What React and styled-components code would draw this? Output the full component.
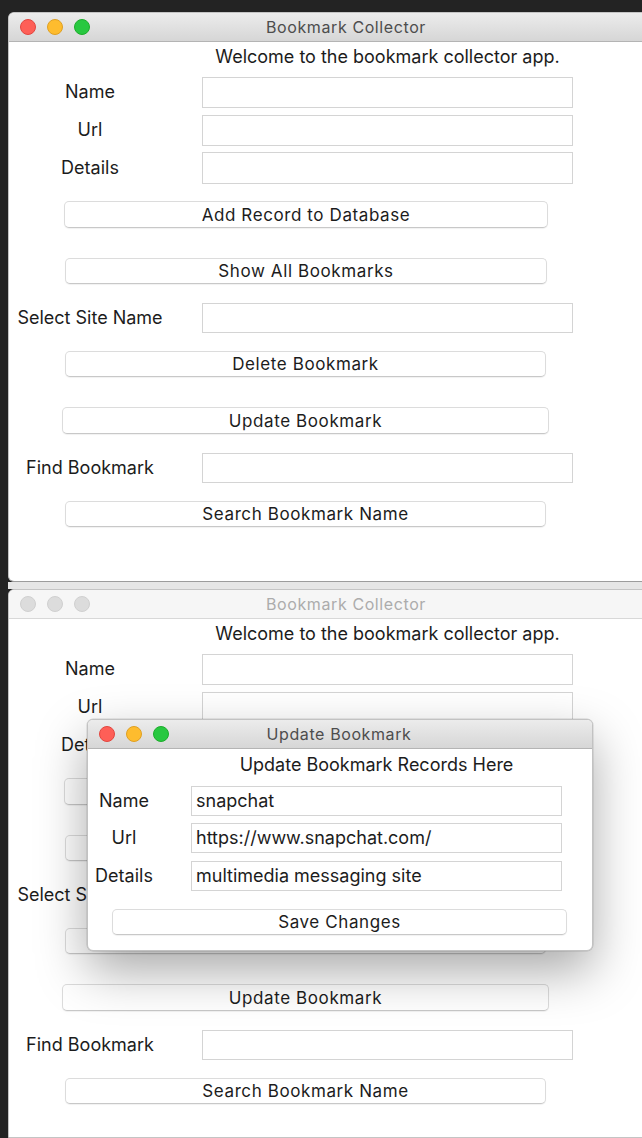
import React from "react";
import styled, { createGlobalStyle, css } from "styled-components";

const Global = createGlobalStyle`
  html, body {
    margin: 0;
    padding: 0;
    width: 642px;
    height: 1138px;
    overflow: hidden;
    background: #232323;
  }
  * { box-sizing: border-box; }
`;

const FONT = `Inter, "DejaVu Sans", sans-serif`;

const Desktop = styled.div`
  position: relative;
  width: 642px;
  height: 1138px;
  padding: 12px 0 0 8px;
  display: flex;
  flex-direction: column;
  gap: 7px;
  font-family: ${FONT};
  color: #1c1c1c;
`;

const Gap = styled.div`
  position: absolute;
  left: 8px;
  right: 0;
  top: 582px;
  height: 7px;
  background: #e6e6e6;
`;

const Window = styled.div`
  position: relative;
  width: 660px;
  flex: ${(p) => (p.$grow ? "1 0 auto" : "0 0 auto")};
  background: #fff;
  border: 1px solid #c4c4c4;
  border-radius: 6px 6px ${(p) => (p.$grow ? "0 0" : "6px 6px")};
  overflow: hidden;
  ${(p) =>
    !p.$grow &&
    css`
      border-bottom: 1px solid #9c9c9c;
    `}
`;

const TitleBar = styled.div`
  position: relative;
  height: 29px;
  display: flex;
  align-items: center;
  padding-left: 11px;
  gap: 11px;
  border-bottom: 1px solid ${(p) => (p.$inactive ? "#d8d8d8" : "#b4b4b4")};
  background: ${(p) =>
    p.$inactive ? "#f6f6f6" : "linear-gradient(#ececec, #d6d6d6)"};
`;

const Light = styled.span`
  width: 16px;
  height: 16px;
  border-radius: 50%;
  background: ${(p) => p.$c};
  border: 1px solid ${(p) => p.$b};
`;

const Title = styled.div`
  position: absolute;
  top: 0;
  bottom: 0;
  left: ${(p) => p.$cx}px;
  transform: translateX(-50%);
  display: flex;
  align-items: center;
  font-size: 16px;
  letter-spacing: 0.6px;
  white-space: nowrap;
  color: ${(p) => (p.$inactive ? "#acacac" : "#4d4d4d")};
`;

const Body = styled.div`
  display: flex;
  flex-direction: column;
  height: ${(p) => (p.$h ? `${p.$h}px` : "auto")};
`;

const Welcome = styled.div`
  margin-top: ${(p) => p.$top}px;
  margin-left: ${(p) => p.$left}px;
  width: 371px;
  height: 20px;
  line-height: 20px;
  text-align: center;
  font-size: 18px;
  white-space: nowrap;
`;

const FieldRow = styled.div`
  margin-top: ${(p) => p.$top}px;
  display: flex;
  align-items: center;
  height: ${(p) => p.$h}px;
`;

const Label = styled.div`
  width: ${(p) => p.$w}px;
  text-align: center;
  font-size: 18px;
  padding-bottom: 2px;
  white-space: nowrap;
`;

const Entry = styled.div`
  margin-left: ${(p) => p.$left}px;
  width: 371px;
  height: 100%;
  border: 1px solid #d4d4d4;
  background: #fff;
  display: flex;
  align-items: center;
  padding: 0 0 2px 4px;
  font-size: 18px;
  white-space: nowrap;
`;

const ButtonLane = styled.div`
  margin-top: ${(p) => p.$top}px;
  width: ${(p) => p.$lane}px;
  display: flex;
  justify-content: center;
`;

const Button = styled.div`
  width: ${(p) => p.$w}px;
  height: ${(p) => p.$h}px;
  margin-left: ${(p) => p.$shift || 0}px;
  background: #fff;
  border: 1px solid #dcdcdc;
  border-bottom-color: #c8c8c8;
  border-radius: 5px;
  box-shadow: 0 1px 1px rgba(0, 0, 0, 0.06);
  display: flex;
  align-items: center;
  justify-content: center;
  font-size: 17px;
  letter-spacing: 0.6px;
  white-space: nowrap;
`;

const Dialog = styled.div`
  position: absolute;
  left: 87px;
  top: 719px;
  width: 506px;
  height: 232px;
  background: #fff;
  border: 1px solid #c2c2c2;
  border-radius: 6px;
  overflow: hidden;
  box-shadow: 0 20px 50px rgba(0, 0, 0, 0.34), 0 0 0 0.5px rgba(0, 0, 0, 0.15);
`;

function Lights({ inactive }) {
  if (inactive) {
    return (
      <>
        <Light $c="#dcdcdc" $b="#d0d0d0" />
        <Light $c="#dcdcdc" $b="#d0d0d0" />
        <Light $c="#dcdcdc" $b="#d0d0d0" />
      </>
    );
  }
  return (
    <>
      <Light $c="#fe5f57" $b="#e2463f" />
      <Light $c="#febc2e" $b="#dfa023" />
      <Light $c="#28c840" $b="#1dad2b" />
    </>
  );
}

function MainContent({ h }) {
  return (
    <Body $h={h}>
      <Welcome $top={5} $left={193}>Welcome to the bookmark collector app.</Welcome>
      <FieldRow $top={10} $h={31}>
        <Label $w={162}>Name</Label>
        <Entry $left={31} />
      </FieldRow>
      <FieldRow $top={7} $h={31}>
        <Label $w={162}>Url</Label>
        <Entry $left={31} />
      </FieldRow>
      <FieldRow $top={6} $h={32}>
        <Label $w={162}>Details</Label>
        <Entry $left={31} />
      </FieldRow>
      <ButtonLane $top={17} $lane={594}>
        <Button $w={484} $h={27}>Add Record to Database</Button>
      </ButtonLane>
      <ButtonLane $top={30} $lane={594}>
        <Button $w={482} $h={26}>Show All Bookmarks</Button>
      </ButtonLane>
      <FieldRow $top={19} $h={30}>
        <Label $w={162}>Select Site Name</Label>
        <Entry $left={31} />
      </FieldRow>
      <ButtonLane $top={18} $lane={594}>
        <Button $w={481} $h={26} $shift={-1}>Delete Bookmark</Button>
      </ButtonLane>
      <ButtonLane $top={30} $lane={594}>
        <Button $w={487} $h={27} $shift={-1}>Update Bookmark</Button>
      </ButtonLane>
      <FieldRow $top={19} $h={30}>
        <Label $w={162}>Find Bookmark</Label>
        <Entry $left={31} />
      </FieldRow>
      <ButtonLane $top={18} $lane={594}>
        <Button $w={481} $h={26} $shift={-1}>Search Bookmark Name</Button>
      </ButtonLane>
    </Body>
  );
}

export default function App() {
  return (
    <>
      <Global />
      <Desktop>
        <Window>
          <TitleBar>
            <Lights />
            <Title $cx={337}>Bookmark Collector</Title>
          </TitleBar>
          <MainContent h={539} />
        </Window>
        <Gap />
        <Window $grow>
          <TitleBar $inactive>
            <Lights inactive />
            <Title $cx={337} $inactive>Bookmark Collector</Title>
          </TitleBar>
          <MainContent />
        </Window>
        <Dialog>
          <TitleBar>
            <Lights />
            <Title $cx={251}>Update Bookmark</Title>
          </TitleBar>
          <Body>
            <Welcome $top={6} $left={103}>Update Bookmark Records Here</Welcome>
            <FieldRow $top={11} $h={30}>
              <Label $w={72}>Name</Label>
              <Entry $left={31}>snapchat</Entry>
            </FieldRow>
            <FieldRow $top={7} $h={30}>
              <Label $w={72}>Url</Label>
              <Entry $left={31}>https://www.snapchat.com/</Entry>
            </FieldRow>
            <FieldRow $top={8} $h={30}>
              <Label $w={72}>Details</Label>
              <Entry $left={31}>multimedia messaging site</Entry>
            </FieldRow>
            <ButtonLane $top={18} $lane={503}>
              <Button $w={455} $h={26}>Save Changes</Button>
            </ButtonLane>
          </Body>
        </Dialog>
      </Desktop>
    </>
  );
}
